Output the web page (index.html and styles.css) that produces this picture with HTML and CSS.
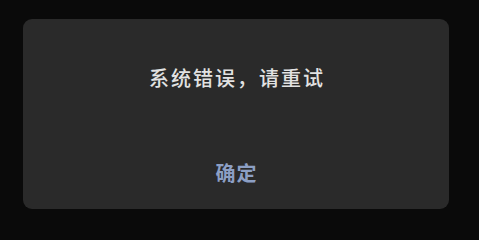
FILE: index.html
```html
<!DOCTYPE html>
<html lang="zh-CN">
<head>
<meta charset="utf-8">
<title>系统错误</title>
<link rel="stylesheet" href="styles.css">
</head>
<body>
<div class="dialog">
  <p class="message">系统错误，请重试</p>
  <button class="confirm" type="button">确定</button>
</div>
</body>
</html>
```

FILE: styles.css
```css
html, body {
  margin: 0;
  padding: 0;
  background: #0a0a0a;
}
body {
  width: 479px;
  height: 227px;
  box-sizing: border-box;
  padding: 19px 30px 18px 23px;
  display: flex;
  font-family: "Noto Sans CJK SC", "Noto Sans", sans-serif;
}
.dialog {
  flex: 1;
  background: #2a2a2a;
  border-radius: 9px;
  display: flex;
  flex-direction: column;
  align-items: center;
  padding: 45px 0 22px;
  box-sizing: border-box;
}
.message {
  margin: 0;
  font-size: 20px;
  line-height: 28px;
  letter-spacing: 2px;
  margin-right: -2px;
  color: #e2e2e2;
  font-weight: 500;
}
.confirm {
  margin-top: auto;
  background: none;
  border: 0;
  padding: 0;
  font-family: inherit;
  font-size: 20px;
  line-height: 28px;
  letter-spacing: 1px;
  margin-right: -1px;
  color: #8c9fc4;
  font-weight: 700;
}
```
